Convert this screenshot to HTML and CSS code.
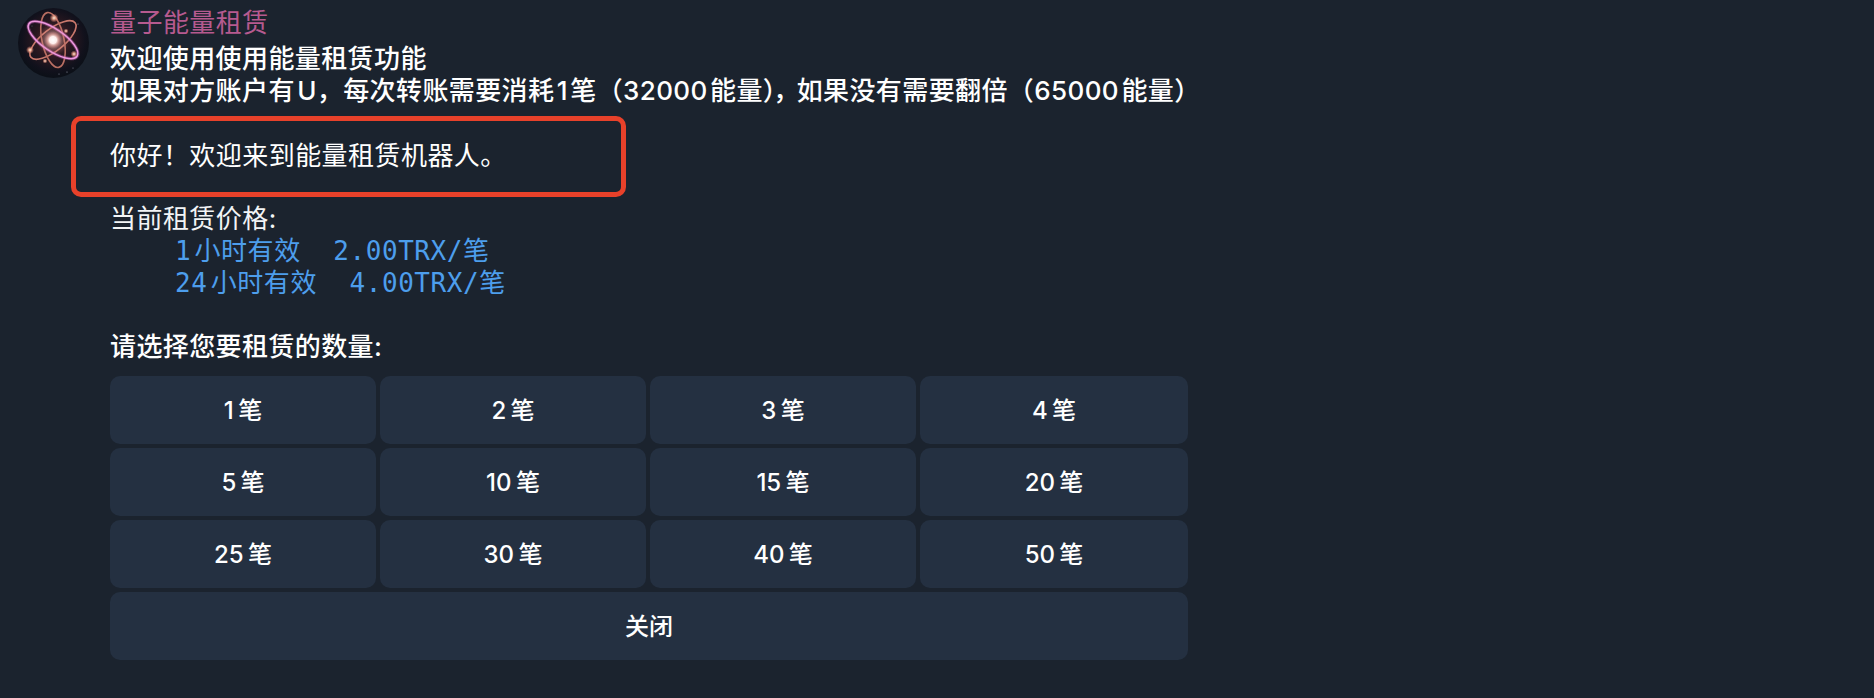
FILE: index.html
```html
<!DOCTYPE html>
<html lang="zh-CN">
<head>
<meta charset="utf-8">
<title>量子能量租赁</title>
<link rel="stylesheet" href="styles.css">
</head>
<body>
<main class="message">
  <svg class="avatar" viewBox="0 0 71 70" aria-hidden="true">
    <defs>
      <radialGradient id="bg" cx="50%" cy="46%" r="52%">
        <stop offset="0" stop-color="#5a2c30"/>
        <stop offset=".5" stop-color="#2a1820"/>
        <stop offset=".85" stop-color="#11111c"/>
        <stop offset="1" stop-color="#0c1018"/>
      </radialGradient>
      <radialGradient id="core" cx="50%" cy="50%" r="50%">
        <stop offset="0" stop-color="#fff"/>
        <stop offset=".4" stop-color="#fff0ee"/>
        <stop offset=".7" stop-color="#e99a90" stop-opacity=".55"/>
        <stop offset="1" stop-color="#c86a70" stop-opacity="0"/>
      </radialGradient>
      <radialGradient id="glow" cx="50%" cy="50%" r="50%">
        <stop offset="0" stop-color="#fff3e6"/>
        <stop offset=".4" stop-color="#f3a98d" stop-opacity=".8"/>
        <stop offset="1" stop-color="#e07a70" stop-opacity="0"/>
      </radialGradient>
      <filter id="soft" x="-10%" y="-10%" width="120%" height="120%">
        <feGaussianBlur stdDeviation=".45"/>
      </filter>
    </defs>
    <ellipse cx="35.5" cy="35" rx="35.5" ry="35" fill="url(#bg)"/>
    <g fill="none" filter="url(#soft)">
      <ellipse cx="35" cy="32" rx="28" ry="11" stroke="#c9786c" stroke-width="1.6" transform="rotate(-38 35 32)"/>
      <ellipse cx="35" cy="32" rx="28" ry="11" stroke="#b96e62" stroke-width="1.6" transform="rotate(78 35 32)"/>
      <ellipse cx="35" cy="32" rx="29" ry="11" stroke="#c45bb4" stroke-width="3.4" stroke-opacity=".45" transform="rotate(34 35 32)"/>
      <ellipse cx="35" cy="32" rx="29" ry="11" stroke="#ee9ae0" stroke-width="1.5" transform="rotate(34 35 32)"/>
    </g>
    <circle cx="35" cy="32" r="16" fill="url(#core)" opacity=".35"/>
    <circle cx="35" cy="32" r="9" fill="url(#core)"/>
    <circle cx="36" cy="10" r="4.5" fill="url(#glow)"/>
    <circle cx="12" cy="42" r="4" fill="url(#glow)"/>
    <circle cx="56" cy="46" r="3.5" fill="url(#glow)"/>
    <circle cx="48" cy="23" r="2.5" fill="url(#glow)"/>
    <circle cx="27" cy="53" r="2.5" fill="url(#glow)"/>
    <g fill="#cfd3e6" opacity=".7">
      <circle cx="49" cy="64" r=".6"/><circle cx="55" cy="60" r=".5"/><circle cx="41" cy="66" r=".5"/><circle cx="60" cy="16" r=".5"/><circle cx="14" cy="18" r=".4"/>
    </g>
  </svg>
  <div class="body">
    <div class="sender">量子能量租赁</div>
    <p class="lead">欢迎使用使用能量租赁功能</p>
    <p class="lead">如果对方账户有 U，每次转账需要消耗 1 笔（32000 能量<span class="tight">），</span>如果没有需要翻倍（65000 能量）</p>
    <div class="callout">你好！欢迎来到能量租赁机器人。</div>
    <p class="plain">当前租赁价格:</p>
    <p class="code">    1小时有效  2.00TRX/笔</p>
    <p class="code">    24小时有效  4.00TRX/笔</p>
    <p class="blank"></p>
    <p class="lead">请选择您要租赁的数量:</p>
    <div class="keys">
      <button class="key">1 笔</button>
      <button class="key">2 笔</button>
      <button class="key">3 笔</button>
      <button class="key">4 笔</button>
      <button class="key">5 笔</button>
      <button class="key">10 笔</button>
      <button class="key">15 笔</button>
      <button class="key">20 笔</button>
      <button class="key">25 笔</button>
      <button class="key">30 笔</button>
      <button class="key">40 笔</button>
      <button class="key">50 笔</button>
      <button class="key wide">关闭</button>
    </div>
  </div>
</main>
</body>
</html>
```
FILE: styles.css
```css
* { box-sizing: border-box; }
html, body { margin: 0; height: 100%; }
body {
  background: #1b232e;
  color: #fff;
  font-family: Inter, "Noto Sans CJK SC", sans-serif;
  font-size: 26px;
  line-height: 32px;
  letter-spacing: .45px;
  overflow: hidden;
}
p { margin: 0; }
.message {
  display: flex;
  align-items: flex-start;
  padding: 8px 0 0 18px;
  gap: 21px;
}
.avatar {
  width: 71px;
  height: 70px;
  flex: none;
}
.body { width: 1078px; flex: none; }
.sender { color: #b65a8f; height: 35px; margin-top: -1px; margin-bottom: 1px; }
.lead { font-weight: 500; white-space: nowrap; word-spacing: -5px; letter-spacing: .4px; }
.tight { letter-spacing: -2.6px; }
.callout {
  margin: 9px 0 6px -39px;
  width: 555px;
  height: 81px;
  padding: 19px 0 0 34px;
  border: 5px solid #e8412a;
  border-radius: 10px;
}
.plain { color: #f2f4f6; }
.code {
  color: #4d9eec;
  white-space: pre;
  font-family: "DejaVu Sans Mono", "Noto Sans CJK SC", monospace;
  font-size: 26px;
  letter-spacing: .58px;
  text-autospace: normal;
}
.blank { height: 32px; }
.keys {
  margin-top: 13px;
  display: grid;
  grid-template-columns: 266px 266px 266px 1fr;
  grid-auto-rows: 68px;
  gap: 4px;
}
.key {
  background: #243041;
  border: 0;
  border-radius: 10px;
  color: #fff;
  font: 500 24px/32px Inter, "Noto Sans CJK SC", sans-serif;
  word-spacing: -2px;
  padding: 2px 0 0;
}
.wide { grid-column: 1 / -1; }
```
